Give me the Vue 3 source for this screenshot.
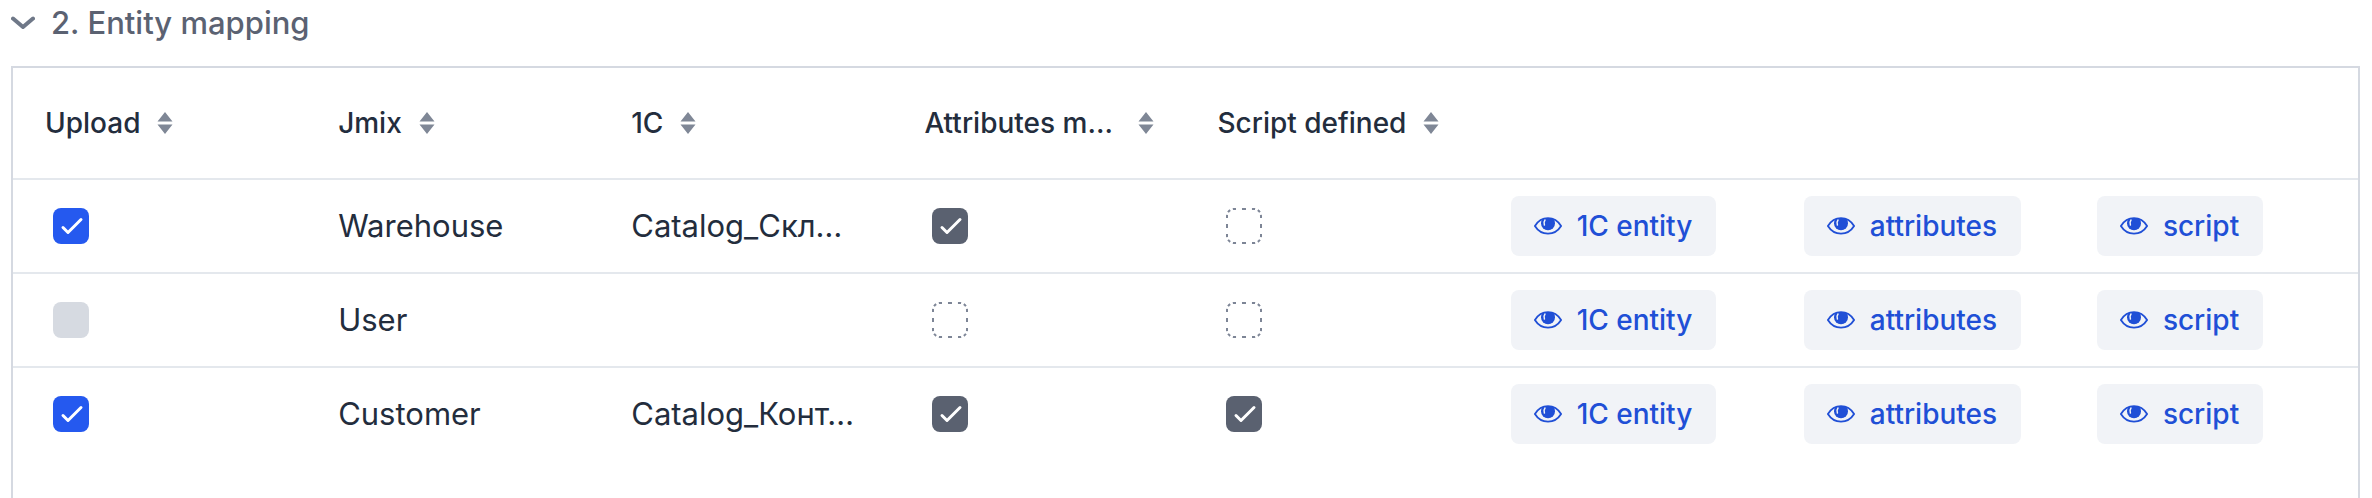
<script setup>
import { ref } from 'vue'

const columns = [
  { key: 'upload', label: 'Upload' },
  { key: 'jmix', label: 'Jmix' },
  { key: 'onec', label: '1C' },
  { key: 'attributes', label: 'Attributes m…', fill: true },
  { key: 'script', label: 'Script defined' },
]
const actions = ['1C entity', 'attributes', 'script']

const rows = ref([
  { jmix: 'Warehouse', onec: 'Catalog_Скл…', upload: true, attributes: true, script: false },
  { jmix: 'User', onec: '', upload: false, attributes: false, script: false },
  { jmix: 'Customer', onec: 'Catalog_Конт…', upload: true, attributes: true, script: true },
])
</script>

<template>
  <main class="page">
    <h2 class="heading">
      <button class="summary" type="button" aria-expanded="true">
        <svg class="chevron" viewBox="0 0 24 24" aria-hidden="true">
          <path d="M2 7.5 12 16 22 7.5" />
        </svg>
        2. Entity mapping
      </button>
    </h2>
    <div class="grid">
      <table>
        <thead>
          <tr>
            <th v-for="col in columns" :key="col.key" scope="col">
              <button class="sorter" type="button">
                <span :class="{ fill: col.fill }">{{ col.label }}</span>
                <svg class="sort-icon" viewBox="0 0 16 24" aria-hidden="true">
                  <path d="M8 1 15.5 10.5H.5ZM8 23 .5 13.5h15Z" />
                </svg>
              </button>
            </th>
            <td v-for="action in actions" :key="action"></td>
          </tr>
        </thead>
        <tbody>
          <tr v-for="row in rows" :key="row.jmix">
            <td>
              <span class="check">
                <input v-model="row.upload" type="checkbox" :aria-label="'Upload ' + row.jmix" />
                <svg viewBox="0 0 36 36" aria-hidden="true"><path class="tick" d="M10 19.5 15 24.5 28 11.5" /></svg>
              </span>
            </td>
            <td>{{ row.jmix }}</td>
            <td>{{ row.onec }}</td>
            <td v-for="flag in ['attributes', 'script']" :key="flag">
              <span class="check readonly">
                <input type="checkbox" :checked="row[flag]" :aria-label="flag + ' ' + row.jmix" aria-readonly="true" @click.prevent />
                <svg viewBox="0 0 36 36" aria-hidden="true">
                  <path class="tick" d="M10 19.5 15 24.5 28 11.5" />
                  <rect class="outline" x="1" y="1" width="34" height="34" rx="7" pathLength="124" />
                </svg>
              </span>
            </td>
            <td v-for="action in actions" :key="action">
              <button class="action" type="button">
                <svg class="eye" viewBox="0 0 28 18" aria-hidden="true">
                  <path class="lid" d="M.9 9C4 4 8.500 1.200 14 1.200S24 4 27.100 9C24 14 19.500 16.600 14 16.600S4 14 .9 9Z" />
                  <path class="iris" d="M8.500 1.800Q14 .2 19.500 1.800Q21 3.800 21 6.300A7 7 0 0 1 7 6.300Q7 3.800 8.500 1.800Z" />
                  <path class="glint" d="M11 3Q9.400 5 10.400 8" />
                </svg>
                {{ action }}
              </button>
            </td>
          </tr>
        </tbody>
      </table>
    </div>
  </main>
</template>

<style>
body {
  background: #fff;
}
</style>

<style scoped>
.page {
  box-sizing: border-box;
  display: flex;
  flex-direction: column;
  min-height: 100vh;
  padding: 0 12px 0 11px;
  color: #232d3d;
  font-family: Inter, "Noto Sans", sans-serif;
  font-size: 31px;
  line-height: 40px;
}
button {
  border: 0;
  margin: 0;
  padding: 0;
  background: none;
  color: inherit;
  font: inherit;
  cursor: pointer;
}
.heading {
  margin: 0;
  padding: 3px 0 23px;
  font-size: 31px;
  font-weight: 500;
}
.summary {
  display: flex;
  align-items: center;
  gap: 16px;
  color: #5b6272;
}
.chevron {
  width: 24px;
  height: 24px;
  fill: none;
  stroke: #6f7888;
  stroke-width: 4;
  stroke-linecap: round;
  stroke-linejoin: round;
}
.grid {
  flex: 1;
  border: 2px solid #d5d9e1;
  border-bottom: 0;
}
table {
  width: 100%;
  table-layout: fixed;
  border-collapse: separate;
  border-spacing: 0;
}
th,
td {
  box-sizing: border-box;
  height: 94px;
  padding: 0 32px;
  border-bottom: 2px solid #e4e8ed;
  text-align: left;
  vertical-align: middle;
  white-space: nowrap;
}
thead th,
thead td {
  height: 112px;
}
tbody tr:last-child td {
  border-bottom-color: transparent;
}
.sorter {
  display: flex;
  align-items: center;
  gap: 17px;
  width: 100%;
  font-size: 28px;
  font-weight: 500;
  text-align: left;
}
.fill {
  flex: 1;
}
.sort-icon {
  flex: none;
  width: 16px;
  height: 24px;
  fill: #7f8796;
}
.check {
  position: relative;
  display: block;
  width: 36px;
  height: 36px;
  margin-left: 8px;
}
.check input {
  display: block;
  box-sizing: border-box;
  width: 36px;
  height: 36px;
  margin: 0;
  border-radius: 8px;
  appearance: none;
  background: #d6dae1;
}
.check input:checked {
  background: #2559ef;
}
.check.readonly input {
  background: transparent;
}
.check.readonly input:checked {
  background: #5a6170;
}
.check svg {
  position: absolute;
  inset: 0;
  fill: none;
  pointer-events: none;
}
.tick {
  display: none;
  stroke: #fff;
  stroke-width: 3;
  stroke-linecap: round;
  stroke-linejoin: round;
}
.outline {
  stroke: #7d8596;
  stroke-width: 2;
  stroke-dasharray: 3.2 6 4 6 3.2 2.8 3 2.8;
  stroke-dashoffset: 1.2;
}
.check input:checked + svg .tick {
  display: block;
}
.check input:checked + svg .outline {
  display: none;
}
.action {
  display: flex;
  align-items: center;
  gap: 15px;
  height: 60px;
  padding: 0 24px 0 23px;
  border-radius: 8px;
  background: #f1f3f7;
  color: #204fd6;
  font-size: 28px;
  font-weight: 500;
}
.eye {
  width: 28px;
  height: 18px;
}
.lid {
  fill: none;
  stroke: currentColor;
  stroke-width: 1.8;
}
.iris {
  fill: currentColor;
}
.glint {
  fill: none;
  stroke: #f1f3f7;
  stroke-width: 1.5;
  stroke-linecap: round;
}
</style>
